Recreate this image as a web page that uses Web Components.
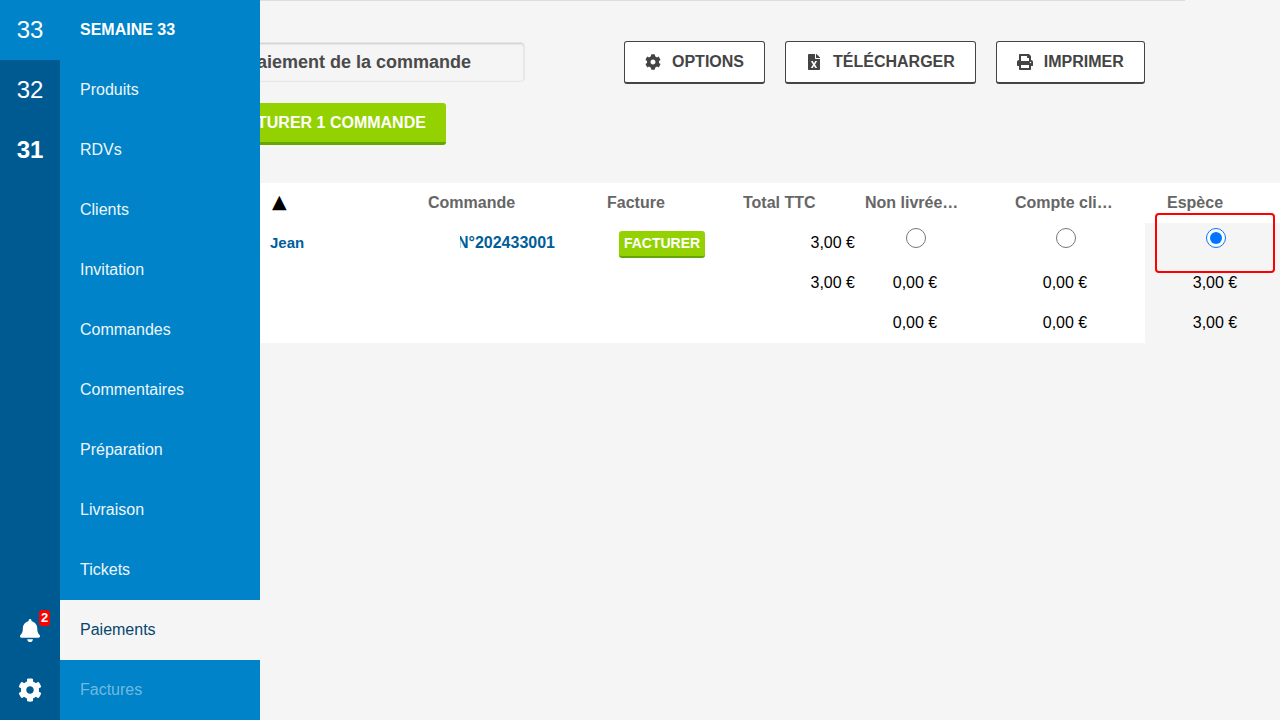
<!DOCTYPE html>
<html lang="fr"><head><meta charset="utf-8"><title>Paiements</title>
<style>
html,body{margin:0;height:100%;overflow:hidden;background:#f5f5f5;font-family:"Liberation Sans",Arial,sans-serif}
app-shell{height:720px}
</style></head><body>

<app-shell>
  <side-bar slot="side" active="Paiements"></side-bar>
  <top-bar title-text="Paiement de la commande"></top-bar>
  <orders-table></orders-table>
</app-shell>

<script>
const ICONS={
cog:[512,512,"M487.4 315.7l-42.6-24.6c4.3-23.2 4.3-47 0-70.2l42.6-24.6c4.9-2.8 7.1-8.6 5.5-14-11.1-35.6-30-67.8-54.7-94.6-3.8-4.1-10-5.1-14.8-2.3L380.8 110c-17.9-15.4-38.5-27.3-60.8-35.1V25.8c0-5.6-3.9-10.5-9.4-11.7-36.7-8.2-74.3-7.8-109.2 0-5.5 1.2-9.4 6.1-9.4 11.7V75c-22.2 7.9-42.8 19.8-60.8 35.1L88.7 85.5c-4.9-2.8-11-1.9-14.8 2.3-24.7 26.7-43.6 58.9-54.7 94.6-1.7 5.4.6 11.2 5.5 14L67.3 221c-4.3 23.2-4.3 47 0 70.2l-42.6 24.6c-4.9 2.8-7.1 8.6-5.5 14 11.1 35.6 30 67.8 54.7 94.6 3.8 4.1 10 5.1 14.8 2.3l42.6-24.6c17.9 15.4 38.5 27.3 60.8 35.1v49.2c0 5.6 3.9 10.5 9.4 11.7 36.7 8.2 74.3 7.8 109.2 0 5.5-1.2 9.4-6.1 9.4-11.7v-49.2c22.2-7.9 42.8-19.8 60.8-35.1l42.6 24.6c4.9 2.8 11 1.9 14.8-2.3 24.7-26.7 43.6-58.9 54.7-94.6 1.5-5.5-.7-11.3-5.6-14.1zM256 336c-44.1 0-80-35.9-80-80s35.9-80 80-80 80 35.9 80 80-35.9 80-80 80z"],
bell:[448,512,"M224 512c35.32 0 63.97-28.65 63.97-64H160.03c0 35.35 28.65 64 63.97 64zm215.39-149.71c-19.32-20.76-55.47-51.99-55.47-154.29 0-77.7-54.48-139.9-127.94-155.16V32c0-17.67-14.32-32-31.98-32s-31.98 14.33-31.98 32v20.84C118.56 68.1 64.08 130.3 64.08 208c0 102.3-36.15 133.53-55.47 154.29-6 6.45-8.66 14.16-8.61 21.71.11 16.4 12.98 32 32.1 32h383.8c19.12 0 32-15.6 32.1-32 .05-7.55-2.61-15.27-8.61-21.71z"],
excel:[384,512,"M224 136V0H24C10.7 0 0 10.7 0 24v464c0 13.3 10.7 24 24 24h336c13.3 0 24-10.7 24-24V160H248c-13.2 0-24-10.8-24-24zm60.1 106.5L224 336l60.1 93.5c5.1 8-.6 18.5-10.1 18.5h-34.9c-4.4 0-8.5-2.4-10.6-6.3C208.9 405.5 192 373 192 373c-6.4 14.8-10 20-36.6 68.8-2.1 3.9-6.1 6.3-10.5 6.3H110c-9.5 0-15.2-10.5-10.1-18.5l60.3-93.5-60.3-93.5c-5.2-8 .6-18.5 10.1-18.5h34.8c4.4 0 8.5 2.4 10.6 6.3 26.1 48.8 20 33.6 36.6 68.5 0 0 6.1-11.7 36.6-68.5 2.1-3.9 6.2-6.3 10.6-6.3H274c9.5-.1 15.2 10.4 10.1 18.4zM384 121.9v6.1H256V0h6.1c6.4 0 12.5 2.5 17 7l97.9 98c4.5 4.5 7 10.6 7 16.9z"],
print:[512,512,"M448 192V77.25c0-8.49-3.37-16.62-9.37-22.63L393.37 9.37c-6-6-14.14-9.37-22.63-9.37H96C78.33 0 64 14.33 64 32v160c-35.35 0-64 28.65-64 64v112c0 8.84 7.16 16 16 16h48v96c0 17.67 14.33 32 32 32h320c17.67 0 32-14.33 32-32v-96h48c8.84 0 16-7.16 16-16V256c0-35.35-28.65-64-64-64zm-64 256H128v-96h256v96zm0-224H128V64h192v48c0 8.84 7.16 16 16 16h48v96zm48 72c-13.25 0-24-10.75-24-24 0-13.26 10.75-24 24-24s24 10.74 24 24c0 13.25-10.75 24-24 24z"]};

class FaIcon extends HTMLElement{
  connectedCallback(){
    const r=this.shadowRoot||this.attachShadow({mode:"open"});
    const [w,h,d]=ICONS[this.getAttribute("name")];
    const H=+this.getAttribute("size")||16;
    r.innerHTML=`<style>:host{display:inline-flex;justify-content:center;line-height:0}svg{display:block;fill:currentColor}</style><svg viewBox="0 0 ${w} ${h}" width="${H*w/h}" height="${H}"><path d="${d}"/></svg>`;
  }
}
customElements.define("fa-icon",FaIcon);

class AppShell extends HTMLElement{
  constructor(){super();this.attachShadow({mode:"open"}).innerHTML=`<style>
  :host{display:block;position:relative;width:1280px;height:720px;overflow:hidden}
  main{display:flex;flex-direction:column;height:100%}
  .rule{height:1px;background:#ddd;width:1185px;flex:none}
  .over{position:absolute;left:0;top:0;bottom:0;width:260px;z-index:2}
  </style><main><div class="rule"></div><slot></slot></main><div class="over"><slot name="side"></slot></div>`;}
}
customElements.define("app-shell",AppShell);

class NavItem extends HTMLElement{
  constructor(){super();this.attachShadow({mode:"open"}).innerHTML=`<style>
  :host{display:flex;align-items:center;height:60px;padding-left:20px;box-sizing:border-box;font-size:16px;color:#eef6fb}
  :host([head]){font-weight:700;color:#fff}
  :host([active]){background:#f5f5f5;color:#06466f}
  :host([muted]){color:rgba(255,255,255,.45)}
  </style><slot></slot>`;}
}
customElements.define("nav-item",NavItem);

class RailItem extends HTMLElement{
  constructor(){super();this.attachShadow({mode:"open"}).innerHTML=`<style>
  :host{display:flex;align-items:center;justify-content:center;position:relative;height:60px;font-size:24px;color:#fff}
  :host([current]){background:#0083c8}
  :host([bold]){font-weight:700}
  .b{display:none;position:absolute;left:39px;top:10px;width:11px;height:16px;border-radius:3px;background:#f00;color:#fff;font:700 13px/16px "Liberation Sans",sans-serif;text-align:center}
  :host([badge]) .b{display:block}
  </style><slot></slot><span class="b"></span>`;}
  connectedCallback(){const b=this.getAttribute("badge");if(b)this.shadowRoot.querySelector(".b").textContent=b;}
}
customElements.define("rail-item",RailItem);

class SideBar extends HTMLElement{
  constructor(){super();
    const items=["Produits","RDVs","Clients","Invitation","Commandes","Commentaires","Préparation","Livraison","Tickets","Paiements","Factures"];
    this.attachShadow({mode:"open"}).innerHTML=`<style>
    :host{display:flex;height:720px;width:260px}
    .rail{width:60px;background:#005a92;display:flex;flex-direction:column}
    .grow{flex:1}
    .panel{width:200px;background:#0083c8;display:flex;flex-direction:column}
    </style>
    <div class="rail">
      <rail-item current>33</rail-item><rail-item>32</rail-item><rail-item bold>31</rail-item>
      <div class="grow"></div>
      <rail-item badge="2"><fa-icon name="bell" size="23"></fa-icon></rail-item>
      <rail-item><fa-icon name="cog" size="24"></fa-icon></rail-item>
    </div>
    <div class="panel"><nav-item head>SEMAINE 33</nav-item>${items.map(i=>`<nav-item ${i==="Paiements"?"active":i==="Factures"?"muted":""}>${i}</nav-item>`).join("")}</div>`;
  }
}
customElements.define("side-bar",SideBar);

class ToolButton extends HTMLElement{
  constructor(){super();this.attachShadow({mode:"open"}).innerHTML=`<style>
  :host{display:inline-flex;align-items:center;gap:11px;height:43px;padding:0 20px;box-sizing:border-box;background:#fff;border:1px solid #444;border-bottom-width:2px;border-radius:3px;color:#444;font-size:16px;font-weight:700;white-space:nowrap}
  ::slotted(fa-icon){width:16px}
  </style><slot name="icon"></slot><slot></slot>`;}
}
customElements.define("tool-button",ToolButton);

class TopBar extends HTMLElement{
  constructor(){super();this.attachShadow({mode:"open"}).innerHTML=`<style>
  :host{display:block;height:182px;box-sizing:border-box;padding-top:40px;color:#444}
  .row{display:flex;align-items:flex-start}
  .title{margin-left:230px;width:295px;height:40px;margin-top:1px;box-sizing:border-box;border:1px solid #e6e6e6;border-radius:4px;box-shadow:inset 0 1px 2px rgba(0,0,0,.18);padding-left:14px;font-size:18px;font-weight:700;line-height:38px;color:#4a4a4a;white-space:nowrap}
  .tools{display:flex;gap:20px;margin-left:99px}
  .go{display:inline-block;margin-left:205px;margin-top:19px;height:42px;box-sizing:border-box;padding:0 20px;background:#93d200;border-bottom:3px solid #66a600;border-radius:3px;color:#fff;font-size:16px;font-weight:700;line-height:39px;white-space:nowrap}
  </style>
  <div class="row"><div class="title">Paiement de la commande</div>
  <div class="tools">
    <tool-button><fa-icon slot="icon" name="cog" size="16"></fa-icon>OPTIONS</tool-button>
    <tool-button><fa-icon slot="icon" name="excel" size="16"></fa-icon>TÉLÉCHARGER</tool-button>
    <tool-button><fa-icon slot="icon" name="print" size="16"></fa-icon>IMPRIMER</tool-button>
  </div></div>
  <div class="go">FACTURER 1 COMMANDE</div>`;}
}
customElements.define("top-bar",TopBar);

class OrdersTable extends HTMLElement{
  constructor(){super();
    const radio=(c)=>`<input type="radio" name="pay"${c?" checked":""}>`;
    this.attachShadow({mode:"open"}).innerHTML=`<style>
    :host{display:block;position:relative;margin-left:240px;width:1040px;font-size:16px;color:#000}
    .g{display:grid;grid-template-columns:178px 179px 136px 122px 150px 140px 135px;grid-auto-rows:40px;background:#fff}
    .g>div{display:flex;align-items:center;min-width:0;box-sizing:border-box}
    .h{font-weight:700;color:#666;padding:0 10px}
    .h span{display:block;overflow:hidden;text-overflow:ellipsis;white-space:nowrap;width:100px}
    .sort{padding-left:32px;padding-bottom:4px;color:#000;font-family:"DejaVu Sans",sans-serif;font-size:19px;font-weight:400}
    .c{justify-content:center;width:120px}
    .e{background:#f5f5f5;padding-left:20px;padding-right:15px;justify-content:center}
    .hh{padding-left:22px}
    .jean{padding-left:30px;padding-bottom:1px;color:#005e99;font-weight:700;font-size:15px}
    .num{margin:0 42px;justify-content:flex-end;overflow:hidden;color:#005e99;font-weight:700;white-space:nowrap}
    .r{justify-content:flex-end}
    .bt{padding-left:22px;align-items:flex-start !important;padding-top:8px}
    .badge{display:block;width:86px;height:27px;box-sizing:border-box;background:#93d200;border-bottom:2px solid #66a600;border-radius:3px;color:#fff;font-size:14px;font-weight:700;line-height:24px;text-align:center}
    input{appearance:auto;width:20px;height:20px;margin:0 0 10px 2px;flex:none}
    .e input{margin-left:1px}
    .frame{position:absolute;left:915px;top:30px;width:120px;height:60px;box-sizing:border-box;border:2px solid #f00;border-radius:4px;pointer-events:none}
    </style>
    <div class="g">
      <div class="h sort">▲</div><div class="h"><span>Commande</span></div><div class="h"><span>Facture</span></div><div class="h"><span>Total TTC</span></div><div class="h"><span>Non livrées à payer</span></div><div class="h"><span>Compte client</span></div><div class="h hh"><span>Espèce</span></div>
      <div class="jean">Jean</div><div class="num"><span>N°202433001</span></div><div class="bt"><span class="badge">FACTURER</span></div><div class="r">3,00 €</div><div class="c">${radio()}</div><div class="c">${radio()}</div><div class="e">${radio(1)}</div>
      <div></div><div></div><div></div><div class="r">3,00 €</div><div class="c">0,00 €</div><div class="c">0,00 €</div><div class="e">3,00 €</div>
      <div></div><div></div><div></div><div></div><div class="c">0,00 €</div><div class="c">0,00 €</div><div class="e">3,00 €</div>
    </div>
    <div class="frame"></div>`;
  }
}
customElements.define("orders-table",OrdersTable);
</script>
</body></html>
